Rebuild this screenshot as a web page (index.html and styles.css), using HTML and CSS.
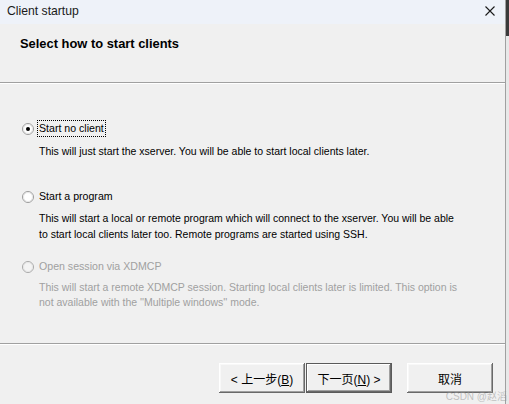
FILE: index.html
```html
<!DOCTYPE html>
<html>
<head>
<meta charset="utf-8">
<title>Client startup</title>
<link rel="stylesheet" href="styles.css">
</head>
<body>
<div class="screen">
  <div class="window">
    <div class="titlebar">
      <span class="title">Client startup</span>
      <svg class="close" width="10" height="10" viewBox="0 0 10 10"><path d="M0.5 0.5 L9.5 9.5 M9.5 0.5 L0.5 9.5" stroke="#1a1a1a" stroke-width="1.1" fill="none"/></svg>
    </div>
    <div class="header">
      <h1 class="heading">Select how to start clients</h1>
    </div>
    <div class="rule"></div>
    <div class="options">
      <div class="option opt1">
        <div class="radio-row">
          <svg class="radio" width="12" height="12" viewBox="0 0 12 12"><circle cx="6" cy="6" r="5.5" fill="#fff" stroke="#9a9a9a"/><circle cx="6" cy="6" r="4.5" fill="none" stroke="#e6e6e6"/><circle cx="6" cy="6" r="2" fill="#000"/></svg>
          <span class="label focus">Start no client</span>
        </div>
        <p class="desc">This will just start the xserver. You will be able to start local clients later.</p>
      </div>
      <div class="option opt2">
        <div class="radio-row">
          <svg class="radio" width="12" height="12" viewBox="0 0 12 12"><circle cx="6" cy="6" r="5.5" fill="#fff" stroke="#9a9a9a"/><circle cx="6" cy="6" r="4.5" fill="none" stroke="#e6e6e6"/></svg>
          <span class="label">Start a program</span>
        </div>
        <p class="desc">This will start a local or remote program which will connect to the xserver. You will be able<br>to start local clients later too. Remote programs are started using SSH.</p>
      </div>
      <div class="option opt3 disabled">
        <div class="radio-row">
          <svg class="radio" width="12" height="12" viewBox="0 0 12 12"><circle cx="6" cy="6" r="5.5" fill="#f4f4f4" stroke="#a8a8a8"/><circle cx="6" cy="6" r="4.5" fill="none" stroke="#e6e6e6"/></svg>
          <span class="label">Open session via XDMCP</span>
        </div>
        <p class="desc">This will start a remote XDMCP session. Starting local clients later is limited. This option is<br>not available with the ''Multiple windows'' mode.</p>
      </div>
    </div>
    <div class="rule rule-bottom"></div>
    <div class="footer">
      <button class="btn">&lt; 上一步(<u>B</u>)</button>
      <button class="btn default">下一页(<u>N</u>) &gt;</button>
      <button class="btn cancel">取消</button>
    </div>
    <span class="watermark">CSDN @赵滔</span>
  </div>
  <div class="edge">
    <div class="edge-top"></div>
    <div class="edge-rest"></div>
  </div>
</div>
</body>
</html>
```
FILE: styles.css
```css
* { box-sizing: border-box; }
html, body { margin: 0; padding: 0; }
body {
  width: 509px;
  height: 404px;
  overflow: hidden;
  background: #f0f0f0;
  font-family: "Liberation Sans", Arial, sans-serif;
  color: #000;
}
.screen {
  display: flex;
  width: 509px;
  height: 404px;
}
.window {
  position: relative;
  width: 505px;
  height: 404px;
  display: flex;
  flex-direction: column;
  background: #f0f0f0;
}
.titlebar {
  height: 24px;
  background: #eef2f9;
  display: flex;
  align-items: center;
  justify-content: space-between;
  padding: 0 10px 0 7px;
}
.title {
  font-size: 12.2px;
  color: #1a1a1a;
  padding-bottom: 3px;
}
.close { margin-bottom: 3px; }
.header {
  height: 58px;
  padding: 12px 0 0 20px;
}
.heading {
  margin: 0;
  font-size: 12.9px;
  font-weight: bold;
  line-height: 15px;
}
.rule {
  height: 2px;
  border-top: 1px solid #a0a0a0;
  border-bottom: 1px solid #ffffff;
}
.options {
  padding-left: 22px;
  height: 259px;
}
.option { display: flex; flex-direction: column; }
.opt1 { margin-top: 36px; }
.opt2 { margin-top: 29px; }
.opt3 { margin-top: 16px; }
.radio-row {
  display: flex;
  align-items: center;
  height: 17px;
}
.radio { flex: none; }
.label {
  margin-left: 3px;
  padding: 0 1px;
  font-size: 10.6px;
  line-height: 15px;
  border: 1px dotted transparent;
}
.label.focus { border-color: #000; }
.desc {
  margin: 6px 0 0 17px;
  font-size: 10.5px;
  line-height: 16px;
}
.opt2 .desc { margin-top: 5px; }
.opt3 .desc { margin-top: 5px; line-height: 15px; }
.disabled .label, .disabled .desc { color: #a0a0a0; }
.footer {
  display: flex;
  align-items: flex-start;
  padding: 18px 11px 0 219px;
}
.btn {
  width: 86px;
  height: 30px;
  padding: 0;
  border: none;
  background: #f0f0f0;
  font-family: "Liberation Sans", "Noto Sans CJK SC", sans-serif;
  font-size: 12px;
  color: #000;
  box-shadow: inset -1px -1px #696969, inset 1px 1px #ffffff, inset -2px -2px #a0a0a0, inset 2px 2px #f8f8f8;
}
.btn u { text-decoration: underline; }
.btn.default {
  margin-left: 1px;
  box-shadow: inset 0 0 0 1px #5a5a5a, inset -2px -2px #696969, inset 2px 2px #ffffff, inset -3px -3px #a0a0a0;
}
.btn.cancel { margin-left: 15px; }
.watermark {
  position: absolute;
  right: -2px;
  bottom: 1px;
  font-family: "Liberation Sans", "Noto Sans CJK SC", sans-serif;
  font-size: 10px;
  color: rgba(150, 150, 150, 0.55);
}
.edge {
  width: 4px;
  display: flex;
  flex-direction: column;
  border-left: 1px solid #a0a0a0;
}
.edge-top { height: 36px; background: #3a3a3a; }
.edge-rest { flex: 1; background: #e8e8e8; }
```
